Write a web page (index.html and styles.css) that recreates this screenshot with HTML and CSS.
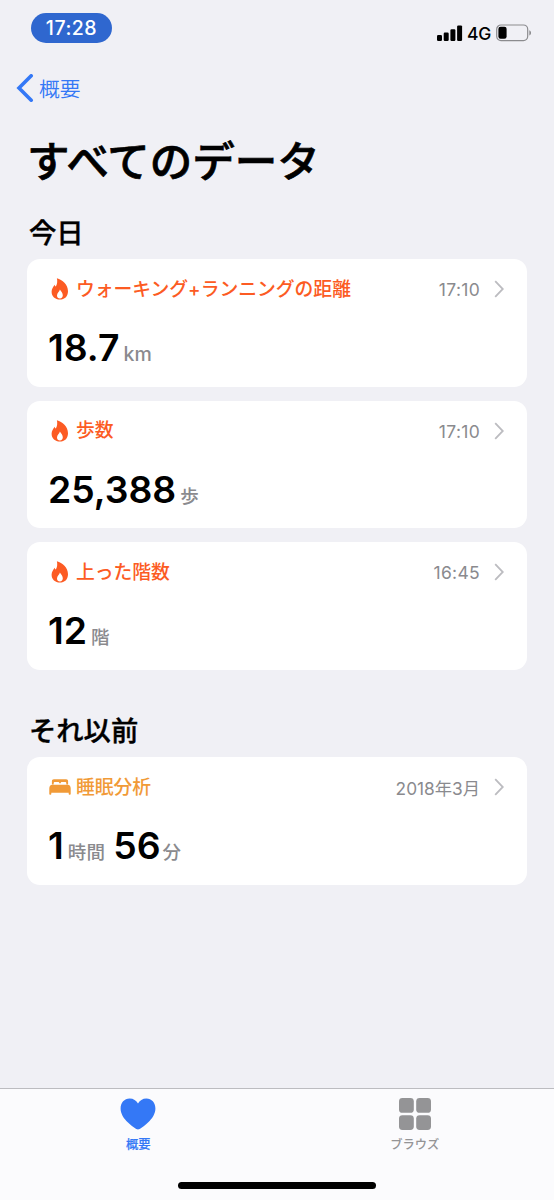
FILE: index.html
```html
<!DOCTYPE html>
<html lang="ja">
<head>
    <meta charset="UTF-8">
    <meta name="viewport" content="width=device-width, initial-scale=1.0">
    <title>すべてのデータ</title>
    <link rel="stylesheet" href="styles.css">
</head>
<body>

    <svg class="sprite" width="0" height="0">
        <symbol id="flame" viewBox="0 0 22 22">
            <path fill-rule="evenodd" d="M7.9 0.3C13.4 1.8 19 6.6 19 13.2C19 18.4 15.5 21.6 10.9 21.6C6.2 21.6 2.6 18.4 2.6 13.8C2.6 10.8 4.2 9 5.8 6.8C6 7.8 6.3 8.2 6.8 8.6C8.2 6.2 8.6 3.4 7.9 0.3ZM10.9 11.4C10.6 13.6 8 14.8 8 17.5C8 19.4 9.2 20.5 10.9 20.5C12.7 20.5 13.8 19.3 13.8 17.3C13.8 14.8 12.2 13.6 10.9 11.4Z"/>
        </symbol>
        <symbol id="bed" viewBox="0 0 22 16">
            <path d="M2.9 5.5V2.2C2.9 0.9 3.6 0.2 4.9 0.2H17.1C18.4 0.2 19.1 0.9 19.1 2.2V5.5H17.3V4.2C17.3 3.4 16.8 2.9 16 2.9H13C12.2 2.9 11.7 3.4 11.7 4.2H10.3C10.3 3.4 9.8 2.9 9 2.9H6C5.2 2.9 4.7 3.4 4.7 4.2V5.5Z"/>
            <path d="M3.3 5.8H18.7C20.6 5.8 21.7 7.4 21.7 9.4V15C21.7 15.5 21.4 15.8 20.9 15.8H20.5C20 15.8 19.7 15.5 19.7 15V13.7H2.3V15C2.3 15.5 2 15.8 1.5 15.8H1.1C0.6 15.8 0.3 15.5 0.3 15V9.4C0.3 7.4 1.4 5.8 3.3 5.8Z"/>
        </symbol>
        <symbol id="chevron" viewBox="0 0 10 18">
            <path d="M1.2 1.2L8.8 9L1.2 16.8" fill="none" stroke="currentColor" stroke-width="1.8"/>
        </symbol>
    </svg>

    <header class="status-bar">
        <span class="clock">17:28</span>
        <div class="status-icons">
            <svg width="26" height="16" viewBox="0 0 26 16">
                <rect x="0" y="10" width="5" height="6" rx="1.2"/>
                <rect x="6.7" y="7.5" width="5" height="8.5" rx="1.2"/>
                <rect x="13.4" y="4.2" width="5" height="11.8" rx="1.2"/>
                <rect x="20.1" y="0.4" width="5" height="15.6" rx="1.2"/>
            </svg>
            <span class="network">4G</span>
            <svg width="36" height="18" viewBox="0 0 36 18">
                <rect x="0.7" y="1" width="31" height="15.6" rx="4.3" fill="none" stroke="#8b8b8e" stroke-width="1.2"/>
                <rect x="2.4" y="2.8" width="8.2" height="12" rx="2.2"/>
                <path d="M33.3 6.2C35.6 7 35.6 10.6 33.3 11.4Z" fill="#8b8b8e"/>
            </svg>
        </div>
    </header>

    <nav class="nav-bar">
        <svg width="18" height="28" viewBox="0 0 18 28">
            <path d="M15.2 1.8L3 14L15.2 26.2" fill="none" stroke="currentColor" stroke-width="3.6" stroke-linecap="round" stroke-linejoin="miter"/>
        </svg>
        <span class="back">概要</span>
    </nav>

    <main>
        <h1>すべてのデータ</h1>

        <h2>今日</h2>
        <section class="cards">
            <article class="card activity">
                <div class="card-header">
                    <svg class="card-icon"><use href="#flame"/></svg>
                    <h3>ウォーキング+ランニングの距離</h3>
                    <time>17:10</time>
                    <svg class="chevron"><use href="#chevron"/></svg>
                </div>
                <p class="value"><b>18.7</b><small class="km">km</small></p>
            </article>
            <article class="card activity">
                <div class="card-header">
                    <svg class="card-icon"><use href="#flame"/></svg>
                    <h3>歩数</h3>
                    <time>17:10</time>
                    <svg class="chevron"><use href="#chevron"/></svg>
                </div>
                <p class="value"><b>25,388</b><small>歩</small></p>
            </article>
            <article class="card activity">
                <div class="card-header">
                    <svg class="card-icon"><use href="#flame"/></svg>
                    <h3>上った階数</h3>
                    <time>16:45</time>
                    <svg class="chevron"><use href="#chevron"/></svg>
                </div>
                <p class="value"><b>12</b><small>階</small></p>
            </article>
        </section>

        <h2 class="earlier">それ以前</h2>
        <section class="cards">
            <article class="card sleep">
                <div class="card-header">
                    <svg class="card-icon"><use href="#bed"/></svg>
                    <h3>睡眠分析</h3>
                    <time class="date">2018年3月</time>
                    <svg class="chevron"><use href="#chevron"/></svg>
                </div>
                <p class="value"><b>1</b><small class="hours">時間</small><b>56</b><small class="minutes">分</small></p>
            </article>
        </section>
    </main>

    <footer class="tab-bar">
        <div class="tabs">
            <div class="tab active">
                <svg width="36" height="32" viewBox="0 0 36 32">
                    <path d="M18 31.6C16.6 31.6 11.4 28 8 24.6C3.6 20.2 0.6 15.6 0.6 10.4C0.6 4.6 4.4 0.4 9.6 0.4C13.4 0.4 16.4 2.4 18 5.6C19.6 2.4 22.6 0.4 26.4 0.4C31.6 0.4 35.4 4.6 35.4 10.4C35.4 15.6 32.4 20.2 28 24.6C24.6 28 19.4 31.6 18 31.6Z"/>
                </svg>
                <span>概要</span>
            </div>
            <div class="tab">
                <svg width="32" height="32" viewBox="0 0 32 32">
                    <rect x="0" y="0" width="14.8" height="14.8" rx="3.4"/>
                    <rect x="17.2" y="0" width="14.8" height="14.8" rx="3.4"/>
                    <rect x="0" y="17.2" width="14.8" height="14.8" rx="3.4"/>
                    <rect x="17.2" y="17.2" width="14.8" height="14.8" rx="3.4"/>
                </svg>
                <span>ブラウズ</span>
            </div>
        </div>
        <div class="home-indicator"></div>
    </footer>

</body>
</html>
```

FILE: styles.css
```css
* {
    box-sizing: border-box;
    margin: 0;
    padding: 0;
}
body {
    display: flex;
    flex-direction: column;
    height: 1200px;
    background: #f0f0f5;
    color: #000;
    font-family: Inter, "Noto Sans CJK JP", sans-serif;
}
svg {
    display: block;
    flex-shrink: 0;
}
.sprite {
    position: absolute;
}
.status-bar {
    display: flex;
    justify-content: space-between;
    height: 60px;
    padding: 13px 22px 0 31px;
}
.clock {
    width: 81px;
    height: 30px;
    border-radius: 15px;
    background: #2f67cf;
    color: white;
    font-size: 19.5px;
    font-weight: 500;
    letter-spacing: 0.5px;
    line-height: 31px;
    text-align: center;
}
.status-icons {
    display: flex;
    align-items: center;
    height: 40px;
}
.network {
    width: 29px;
    margin-left: 4px;
    font-size: 17.5px;
    font-weight: 500;
    letter-spacing: -0.3px;
}
.nav-bar {
    display: flex;
    align-items: center;
    gap: 5px;
    height: 56px;
    padding-left: 16px;
    color: #3478f6;
}
.back {
    font-size: 20.8px;
    font-weight: 350;
    line-height: 30px;
    padding-top: 3px;
}
main {
    flex: 1;
    padding: 0 27px;
}
h1 {
    height: 94px;
    font-size: 42.5px;
    font-weight: 500;
    line-height: 91px;
    -webkit-text-stroke: 0.7px;
}
h2 {
    height: 49px;
    padding-left: 2px;
    font-size: 27.3px;
    font-weight: 500;
    line-height: 48px;
    -webkit-text-stroke: 0.4px;
}
.earlier {
    margin-top: 38.5px;
}
.cards {
    display: flex;
    flex-direction: column;
    gap: 14px;
}
.card {
    height: 127.5px;
    padding: 16px 23px 0 22px;
    border-radius: 13px;
    background: white;
}
.activity {
    color: #fc5b23;
}
.sleep {
    color: #f19a37;
}
.card-header {
    display: flex;
    align-items: center;
    height: 28px;
}
.card-icon {
    width: 22px;
    height: 22px;
    margin-right: 5px;
    fill: currentColor;
}
h3 {
    flex: 1;
    padding-top: 1px;
    font-size: 18.8px;
    font-weight: 500;
    line-height: 28px;
    white-space: nowrap;
}
time {
    padding-top: 1px;
    color: #8a8a8e;
    font-size: 17.5px;
    letter-spacing: 0.3px;
}
.date {
    padding-top: 0;
    font-size: 17.3px;
    letter-spacing: 0;
}
.chevron {
    width: 10px;
    height: 18px;
    margin-left: 14px;
    color: #bcbcc0;
}
.value {
    display: flex;
    align-items: baseline;
    height: 58px;
    margin-top: 16px;
    margin-left: -1px;
    line-height: 58px;
}
.value b {
    color: #000;
    font-size: 37.3px;
    font-weight: 600;
}
.value small {
    margin-left: 4px;
    color: #8a8a8e;
    font-size: 18.5px;
    font-weight: 500;
    letter-spacing: 0.2px;
}
.value .km {
    font-size: 19.5px;
}
.value .hours {
    margin: 0 8px 0 4px;
}
.value .minutes {
    margin-left: 2px;
}
.tab-bar {
    height: 112px;
    border-top: 1px solid #bcbcc0;
    background: #fbfbfd;
}
.tabs {
    display: grid;
    grid-template-columns: 1fr 1fr;
    height: 93px;
    padding: 9px 1px 0 0;
}
.tab {
    display: flex;
    flex-direction: column;
    align-items: center;
    gap: 6px;
    color: #949496;
    fill: currentColor;
    font-size: 12.3px;
    font-weight: 500;
    line-height: 18px;
}
.active {
    color: #3478f6;
}
.active span {
    -webkit-text-stroke: 0.2px;
}
.home-indicator {
    width: 198px;
    height: 7px;
    margin: 0 auto;
    border-radius: 4px;
    background: #000;
}
```
